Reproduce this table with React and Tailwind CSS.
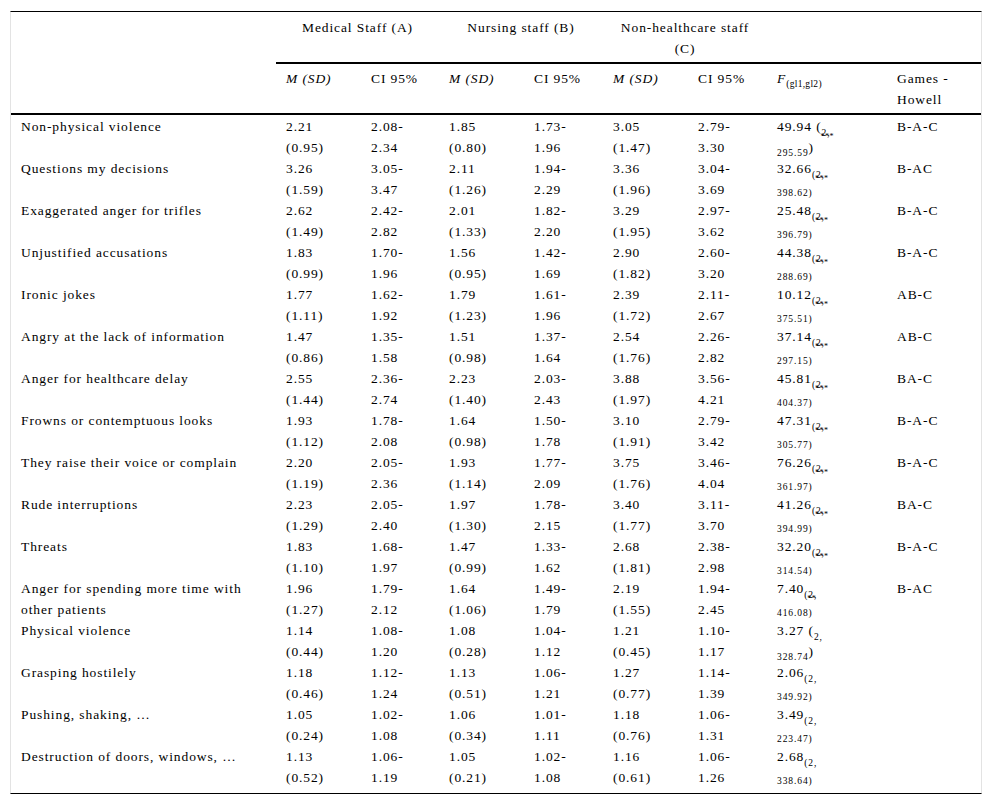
import React from "react";

const rows = [
  ["Non-physical violence", "2.21", "(0.95)", "2.08-", "2.34", "1.85", "(0.80)", "1.73-", "1.96", "3.05", "(1.47)", "2.79-", "3.30", { v: "49.94", df: "295.59", stars: "***", open: true }, "B-A-C"],
  ["Questions my decisions", "3.26", "(1.59)", "3.05-", "3.47", "2.11", "(1.26)", "1.94-", "2.29", "3.36", "(1.96)", "3.04-", "3.69", { v: "32.66", df: "398.62", stars: "***" }, "B-AC"],
  ["Exaggerated anger for trifles", "2.62", "(1.49)", "2.42-", "2.82", "2.01", "(1.33)", "1.82-", "2.20", "3.29", "(1.95)", "2.97-", "3.62", { v: "25.48", df: "396.79", stars: "***" }, "B-A-C"],
  ["Unjustified accusations", "1.83", "(0.99)", "1.70-", "1.96", "1.56", "(0.95)", "1.42-", "1.69", "2.90", "(1.82)", "2.60-", "3.20", { v: "44.38", df: "288.69", stars: "***" }, "B-A-C"],
  ["Ironic jokes", "1.77", "(1.11)", "1.62-", "1.92", "1.79", "(1.23)", "1.61-", "1.96", "2.39", "(1.72)", "2.11-", "2.67", { v: "10.12", df: "375.51", stars: "***" }, "AB-C"],
  ["Angry at the lack of information", "1.47", "(0.86)", "1.35-", "1.58", "1.51", "(0.98)", "1.37-", "1.64", "2.54", "(1.76)", "2.26-", "2.82", { v: "37.14", df: "297.15", stars: "***" }, "AB-C"],
  ["Anger for healthcare delay", "2.55", "(1.44)", "2.36-", "2.74", "2.23", "(1.40)", "2.03-", "2.43", "3.88", "(1.97)", "3.56-", "4.21", { v: "45.81", df: "404.37", stars: "***" }, "BA-C"],
  ["Frowns or contemptuous looks", "1.93", "(1.12)", "1.78-", "2.08", "1.64", "(0.98)", "1.50-", "1.78", "3.10", "(1.91)", "2.79-", "3.42", { v: "47.31", df: "305.77", stars: "***" }, "B-A-C"],
  ["They raise their voice or complain", "2.20", "(1.19)", "2.05-", "2.36", "1.93", "(1.14)", "1.77-", "2.09", "3.75", "(1.76)", "3.46-", "4.04", { v: "76.26", df: "361.97", stars: "***" }, "B-A-C"],
  ["Rude interruptions", "2.23", "(1.29)", "2.05-", "2.40", "1.97", "(1.30)", "1.78-", "2.15", "3.40", "(1.77)", "3.11-", "3.70", { v: "41.26", df: "394.99", stars: "***" }, "BA-C"],
  ["Threats", "1.83", "(1.10)", "1.68-", "1.97", "1.47", "(0.99)", "1.33-", "1.62", "2.68", "(1.81)", "2.38-", "2.98", { v: "32.20", df: "314.54", stars: "***" }, "B-A-C"],
  [["Anger for spending more time with", "other patients"], "1.96", "(1.27)", "1.79-", "2.12", "1.64", "(1.06)", "1.49-", "1.79", "2.19", "(1.55)", "1.94-", "2.45", { v: "7.40", df: "416.08", stars: "**" }, "B-AC"],
  ["Physical violence", "1.14", "(0.44)", "1.08-", "1.20", "1.08", "(0.28)", "1.04-", "1.12", "1.21", "(0.45)", "1.10-", "1.17", { v: "3.27", df: "328.74", open: true }, ""],
  ["Grasping hostilely", "1.18", "(0.46)", "1.12-", "1.24", "1.13", "(0.51)", "1.06-", "1.21", "1.27", "(0.77)", "1.14-", "1.39", { v: "2.06", df: "349.92" }, ""],
  ["Pushing, shaking, …", "1.05", "(0.24)", "1.02-", "1.08", "1.06", "(0.34)", "1.01-", "1.11", "1.18", "(0.76)", "1.06-", "1.31", { v: "3.49", df: "223.47" }, ""],
  ["Destruction of doors, windows, …", "1.13", "(0.52)", "1.06-", "1.19", "1.05", "(0.21)", "1.02-", "1.08", "1.16", "(0.61)", "1.06-", "1.26", { v: "2.68", df: "338.64" }, ""],
];

function FCell({ f }) {
  return (
    <>
      <div className="h-[21px] whitespace-nowrap">
        {f.v}
        {f.open ? " (" : ""}
        <span className="text-[9.5px] leading-none align-[-5px]">{f.open ? "2," : "(2,"}</span>
        {f.stars && (
          <span className="text-[8px] leading-none align-[-8px] -ml-[10px] tracking-[0.5px]">{f.stars}</span>
        )}
      </div>
      <div className="h-[21px] whitespace-nowrap">
        {f.open ? (
          <>
            <span className="text-[9.5px] leading-none align-[-4px]">{f.df}</span>)
          </>
        ) : (
          <span className="text-[9.5px] leading-none align-[-2px]">{f.df})</span>
        )}
      </div>
    </>
  );
}

function TwoLine({ a, b }) {
  return (
    <>
      {a}
      <br />
      {b}
    </>
  );
}

export default function App() {
  return (
    <div className="bg-white min-h-[805px] pt-[11px] pl-[10px] text-black" style={{ fontFamily: '"Liberation Serif", "Times New Roman", serif' }}>
      <div className="w-[972px] border-x border-x-[#e3e3e3] border-y border-y-black">
        <table className="table-fixed w-[970px] border-separate border-spacing-0 text-[13.5px] leading-[21px] tracking-[0.9px]">
          <colgroup>
            <col className="w-[265px]" />
            <col className="w-[85px]" />
            <col className="w-[78px]" />
            <col className="w-[85px]" />
            <col className="w-[79px]" />
            <col className="w-[85px]" />
            <col className="w-[79px]" />
            <col className="w-[120px]" />
            <col className="w-[94px]" />
          </colgroup>
          <thead>
            <tr>
              <th rowSpan={2} className="border-b-2 border-black"></th>
              <th colSpan={2} className="align-top font-normal text-center pt-[5px] pb-[3px] border-b-2 border-black">
                Medical Staff (A)
              </th>
              <th colSpan={2} className="align-top font-normal text-center pt-[5px] pb-[3px] border-b-2 border-black">
                Nursing staff (B)
              </th>
              <th colSpan={2} className="align-top font-normal text-center pt-[5px] pb-[3px] border-b-2 border-black">
                Non-healthcare staff
                <br />
                (C)
              </th>
              <th className="border-b-2 border-black"></th>
              <th className="border-b-2 border-black"></th>
            </tr>
            <tr className="text-left">
              {["M (SD)", "CI 95%", "M (SD)", "CI 95%", "M (SD)", "CI 95%"].map((h, i) => (
                <th key={i} className={`align-top font-normal pl-[10px] pt-[4px] pb-[3px] border-b-2 border-black ${i % 2 === 0 ? "italic" : ""}`}>
                  {h}
                </th>
              ))}
              <th className="align-top font-normal pl-[10px] pt-[4px] pb-[3px] border-b-2 border-black whitespace-nowrap">
                <span className="italic">F</span>
                <span className="text-[9.5px] leading-none align-[-4px] tracking-[0.3px]">(gl1,gl2)</span>
              </th>
              <th className="align-top font-normal pl-[10px] pt-[4px] pb-[3px] border-b-2 border-black">
                Games -
                <br />
                Howell
              </th>
            </tr>
          </thead>
          <tbody>
            {rows.map((r, i) => {
              const pad = i === 0 ? "pt-[1px]" : i === rows.length - 1 ? "pb-[5px]" : "";
              const cell = `align-top pl-[10px] ${pad}`;
              return (
                <tr key={i}>
                  <td className={cell}>
                    {Array.isArray(r[0]) ? <TwoLine a={r[0][0]} b={r[0][1]} /> : r[0]}
                    {!Array.isArray(r[0]) && <div className="h-[21px]"></div>}
                  </td>
                  <td className={cell}><TwoLine a={r[1]} b={r[2]} /></td>
                  <td className={cell}><TwoLine a={r[3]} b={r[4]} /></td>
                  <td className={cell}><TwoLine a={r[5]} b={r[6]} /></td>
                  <td className={cell}><TwoLine a={r[7]} b={r[8]} /></td>
                  <td className={cell}><TwoLine a={r[9]} b={r[10]} /></td>
                  <td className={cell}><TwoLine a={r[11]} b={r[12]} /></td>
                  <td className={cell}><FCell f={r[13]} /></td>
                  <td className={cell}>{r[14]}</td>
                </tr>
              );
            })}
          </tbody>
        </table>
      </div>
    </div>
  );
}
